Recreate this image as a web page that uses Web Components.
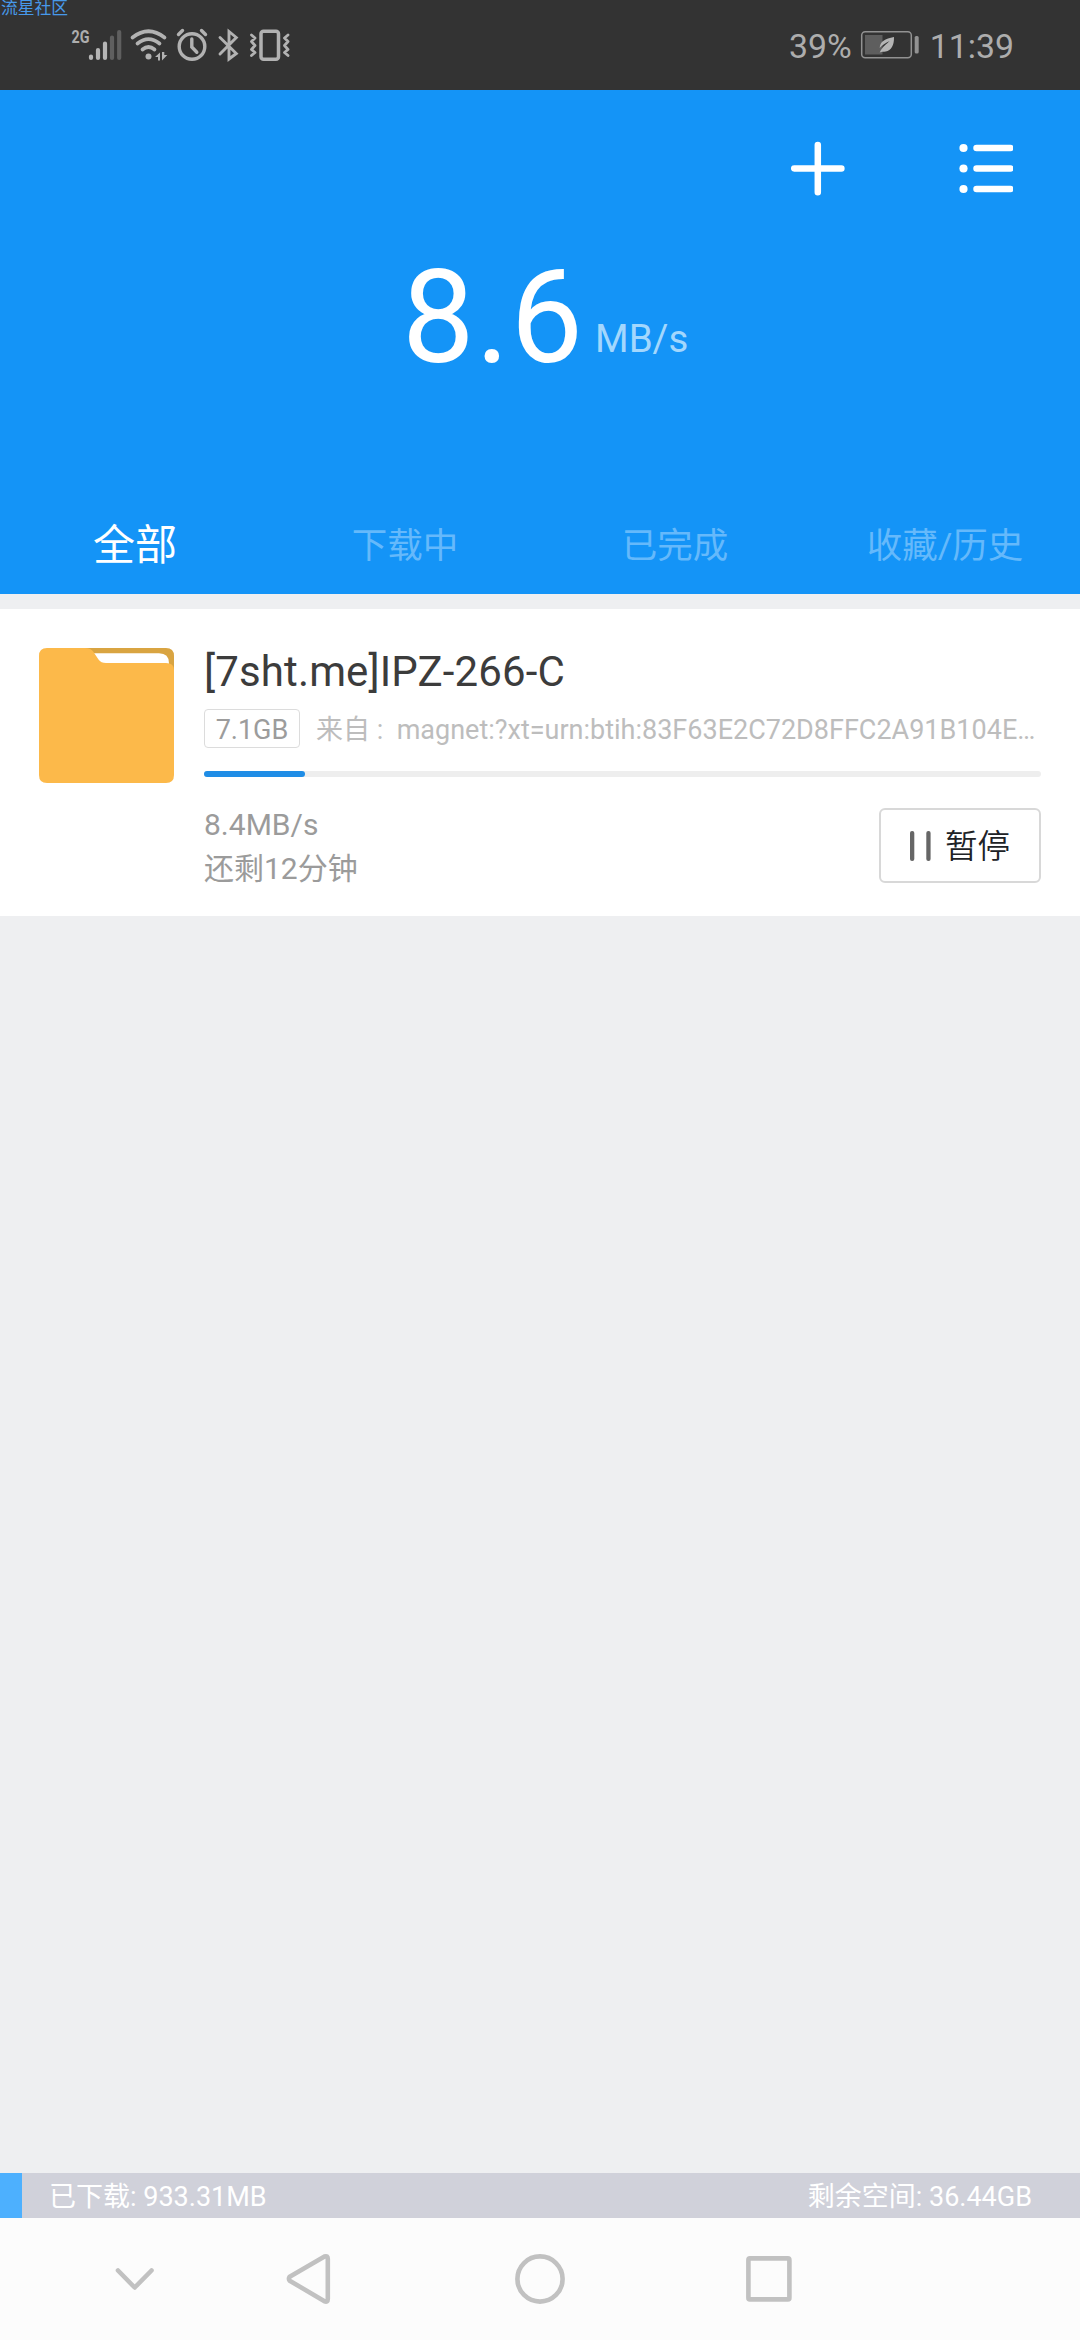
<!DOCTYPE html>
<html lang="zh-CN">
<head>
<meta charset="utf-8">
<title>下载</title>
<style>
html,body{margin:0;padding:0}
body{width:1080px;height:2340px;overflow:hidden;background:#eeeff1;font-family:Roboto,"Noto Sans CJK SC",sans-serif}
</style>
</head>
<body>
<download-app></download-app>
<script>
function define(name, html) {
  const t = document.createElement('template');
  t.innerHTML = html;
  customElements.define(name, class extends HTMLElement {
    constructor() {
      super();
      this.attachShadow({mode: 'open'}).appendChild(t.content.cloneNode(true));
    }
  });
}

define('status-bar', `
<style>
:host{display:flex;position:relative;height:90px;background:#333;color:#adadad;box-sizing:border-box;padding:0 66px 0 72px;justify-content:space-between;align-items:center;font-size:33.800px}
.mark{position:absolute;left:1px;top:-1px;font-size:16.800px;line-height:19px;color:#4799ea}
.l,.r{display:flex;align-items:center}
svg{display:block;flex:none;overflow:visible}
.r span{line-height:40px;position:relative;top:2px}
</style>
<span class="mark">流星社区</span>
<div class="l">
<svg width="51" height="34" viewBox="72 28 51 34"><text x="71.5" y="43.3" font-size="18.5" font-weight="700" textLength="18" lengthAdjust="spacingAndGlyphs" fill="#adadad">2G</text>
<g stroke-width="4.2" stroke-linecap="round" stroke="#b5b5b5"><path d="M91 56.5V58M98 50v8M105 43.5V58"/><path stroke="#5f5f5f" d="M112 37.500V58M119.200 32V58"/></g></svg>
<svg width="38" height="34" viewBox="130 28 38 34" style="margin-left:7px" fill="none" stroke="#b2b2b2" stroke-width="3.7" stroke-linecap="round"><path d="M132.500 37.500Q148.500 25 164.500 37.500M137.500 43.500Q148.500 34.800 159.500 43.500M142.500 49.500Q148.500 44.500 154.500 49.500"/><circle cx="148.500" cy="56.500" r="3" fill="#b2b2b2" stroke="none"/><path d="M160 52.500V60.500h-2V57h-3zM162 52v8.500L167.300 55h-3V52z" fill="#b2b2b2" stroke="none"/></svg>
<svg width="32" height="34" viewBox="176 28 32 34" style="margin-left:8px" fill="none" stroke="#b2b2b2" stroke-width="3.4" stroke-linecap="round"><circle cx="192" cy="46.500" r="12.800"/><path d="M191.800 39v8l5 5.200M178.500 34.500l4-4M205.500 34.500l-4-4"/></svg>
<svg width="22" height="34" viewBox="218 28 22 34" style="margin-left:10px" fill="none" stroke="#b2b2b2" stroke-width="2.900" stroke-linejoin="miter" stroke-linecap="round"><path d="M220 37.500L236.300 53.500 229 59V31.500L236.300 37.500 220 54"/></svg>
<svg width="42" height="34" viewBox="249 28 42 34" style="margin-left:9px" fill="none" stroke="#b2b2b2" stroke-width="3.500" stroke-linecap="round" stroke-linejoin="round"><rect x="261" y="31.300" width="17.500" height="28" rx="2.500"/><path stroke-width="2.800" d="M251.500 35l3.500 3-3.500 3.500 3.500 4-3.500 4 3.500 3-3.500 3M288 35l-3.500 3 3.500 3.500-3.500 4 3.500 4-3.500 3 3.500 3"/></svg>
</div>
<div class="r"><span>39%</span>
<svg width="59" height="30" viewBox="861 31 59 30" style="margin:0 11px 0 8px"><rect x="862.700" y="32.700" width="49.600" height="26" rx="3.500" fill="none" stroke="#929292" stroke-width="1.500"/><rect x="866" y="36" width="17.500" height="19.500" fill="#5e5e5e"/><path d="M895 38c-9 1.500-14 4.500-14.300 11 5-5 7.500-5.500 10-7-3 3-7 5-10 11.500 2-1 4-.6 6-.9 5.500-1.200 8.500-6 8.300-14.600z" fill="#b5b5b5"/><rect x="915.700" y="37" width="4" height="17.500" rx="1.500" fill="#929292"/></svg>
<span>11:39</span></div>`);

define('speed-header', `
<style>
:host{display:flex;flex-direction:column;height:504px;background:#1494f7;color:#fff}
.act{display:flex;justify-content:flex-end;gap:112px;padding:51px 67px 0 0;height:57px}
svg{display:block}
.speed{display:flex;align-items:baseline;margin:55px 0 0 402px;height:130px;line-height:130px}
b{font:400 129px/130px Roboto,sans-serif;letter-spacing:1px}
i{font-style:normal;font-size:38.500px;color:#a3d7fd;margin-left:11px;position:relative;top:-10px}
.tabs{display:flex;margin-top:123px;height:80px}
</style>
<div class="act">
<svg width="54" height="56" viewBox="0 0 54 56" stroke="#fff" stroke-width="6.500" stroke-linecap="round"><path d="M3.200 27.500h47.200M26.800 4v47.200"/></svg>
<svg width="56" height="56" viewBox="0 0 56 56" stroke="#fff" stroke-width="6.500" stroke-linecap="round"><path d="M19.500 7h34M19.500 27.500h34M19.500 48h34"/><g fill="#fff" stroke="none"><circle cx="6.500" cy="7" r="4.100"/><circle cx="6.500" cy="27.500" r="4.100"/><circle cx="6.500" cy="48" r="4.100"/></g></svg>
</div>
<div class="speed"><b>8.6</b><i>MB/s</i></div>
<div class="tabs"><slot></slot></div>`);

define('nav-tab', `
<style>
:host{display:flex;flex:1;align-items:center;justify-content:center;font-size:35.500px;line-height:60px;color:#65b9fb}
:host([active]){font-size:42px;color:#fff}
</style><slot></slot>`);

define('folder-icon', `
<style>:host{display:block;width:135px;height:135px}svg{display:block}</style>
<svg width="135" height="135" viewBox="0 0 135 135"><path d="M40 0h87q8 0 8 8v20H40z" fill="#d9a441"/><path d="M50 5.200h70q10 0 10 10V25H50z" fill="#fff"/><path d="M8 0H46Q52 0 54.500 4L59.500 11.500Q62 15 67 15H127q8 0 8 7V127q0 8-8 8H8q-8 0-8-8V8Q0 0 8 0z" fill="#fcb94a"/></svg>`);

define('pause-button', `
<style>
:host{display:flex;box-sizing:border-box;width:162px;height:75px;border:2px solid #d8d8d8;border-radius:6px;align-items:center;padding-left:29px;font-size:32.500px;line-height:50px;color:#202226}
svg{margin-right:14px;flex:none}
span{position:relative;top:1px;font-weight:350}
</style>
<svg width="21" height="30" viewBox="0 0 21 30"><rect width="4.300" height="30" rx="2" fill="#666"/><rect x="16.300" width="4.300" height="30" rx="2" fill="#666"/></svg><span><slot></slot></span>`);

define('task-card', `
<style>
:host{display:flex;box-sizing:border-box;height:307px;margin-top:15px;background:#fff;padding:39px 39px 0 39px;gap:30px}
.body{flex:1;min-width:0;display:flex;flex-direction:column}
.title{font-size:42px;letter-spacing:.13px;line-height:50px;height:50px;color:#3c3c3c;margin-top:-1px}
.meta{display:flex;margin-top:12px;height:39px;align-items:center;gap:16px}
.size{box-sizing:border-box;border:1.500px solid #dcdcdc;border-radius:4px;width:96px;height:39px;line-height:40px;text-align:center;font-size:27px;color:#9c9c9c}
.from{flex:1;min-width:0;overflow:hidden;white-space:nowrap;font-size:27px;line-height:41px;color:#bdbdbd;padding-top:3px}
.bar{height:6px;margin-top:23px;border-radius:3px;background:#eee;width:837px}
.bar div{width:101px;height:6px;border-radius:3px;background:#1f8de6}
.foot{display:flex;justify-content:space-between;margin-top:31px}
.st{display:flex;flex-direction:column;font-size:30px;line-height:44px;color:#9b9b9b;margin-top:-5px}
</style>
<folder-icon></folder-icon>
<div class="body">
<div class="title"><slot name="title"></slot></div>
<div class="meta"><div class="size"><slot name="size"></slot></div><div class="from"><slot name="from"></slot></div></div>
<div class="bar"><div></div></div>
<div class="foot"><div class="st"><slot name="rate"></slot><slot name="left"></slot></div><pause-button>暂停</pause-button></div>
</div>`);

define('storage-bar', `
<style>
:host{display:flex;height:45px;background:#d0d1da;color:#fff;font-size:27px;align-items:center}
.f{width:22px;height:45px;background:#4db0fe}
.t{flex:1;display:flex;justify-content:space-between;padding:3px 48px 0 27px;height:42px;line-height:42px}
</style><div class="f"></div><div class="t"><slot></slot></div>`);

define('nav-bar', `
<style>
:host{display:flex;height:122px;background:#fcfcfc;align-items:center}
svg{display:block;fill:none;stroke:#c1c1c1;stroke-width:4.600;stroke-linejoin:round;stroke-linecap:round}
</style>
<svg width="40" height="24" viewBox="0 0 40 24" style="margin-left:115px"><path d="M3 3.500L19.700 20.500 36.500 3.500"/></svg>
<svg width="46" height="52" viewBox="0 0 46 52" style="margin-left:131px"><path d="M3.700 23.700Q2.200 25.800 3.700 27.700L38.500 48.300Q41.800 49.500 41.800 46V5.700Q41.800 2.300 38.500 3.500z"/></svg>
<svg width="50" height="50" viewBox="0 0 50 50" style="margin-left:183px"><circle cx="25" cy="25" r="22.600"/></svg>
<svg width="46" height="46" viewBox="0 0 46 46" style="margin-left:181px"><rect x="2.400" y="2.400" width="41" height="41" rx="1.500"/></svg>`);

define('download-app', `
<style>
:host{display:flex;flex-direction:column;width:1080px;height:2340px;background:#eeeff1}
.space{flex:1}
</style>
<status-bar></status-bar>
<speed-header><nav-tab active>全部</nav-tab><nav-tab>下载中</nav-tab><nav-tab>已完成</nav-tab><nav-tab>收藏/历史</nav-tab></speed-header>
<task-card><span slot="title">[7sht.me]IPZ-266-C</span><span slot="size">7.1GB</span><span slot="from">来自 :&nbsp; magnet:?xt=urn:btih:83F63E2C72D8FFC2A91B104E…</span><span slot="rate">8.4MB/s</span><span slot="left">还剩12分钟</span></task-card>
<div class="space"></div>
<storage-bar><span>已下载: 933.31MB</span><span>剩余空间: 36.44GB</span></storage-bar>
<nav-bar></nav-bar>`);
</script>
</body>
</html>
